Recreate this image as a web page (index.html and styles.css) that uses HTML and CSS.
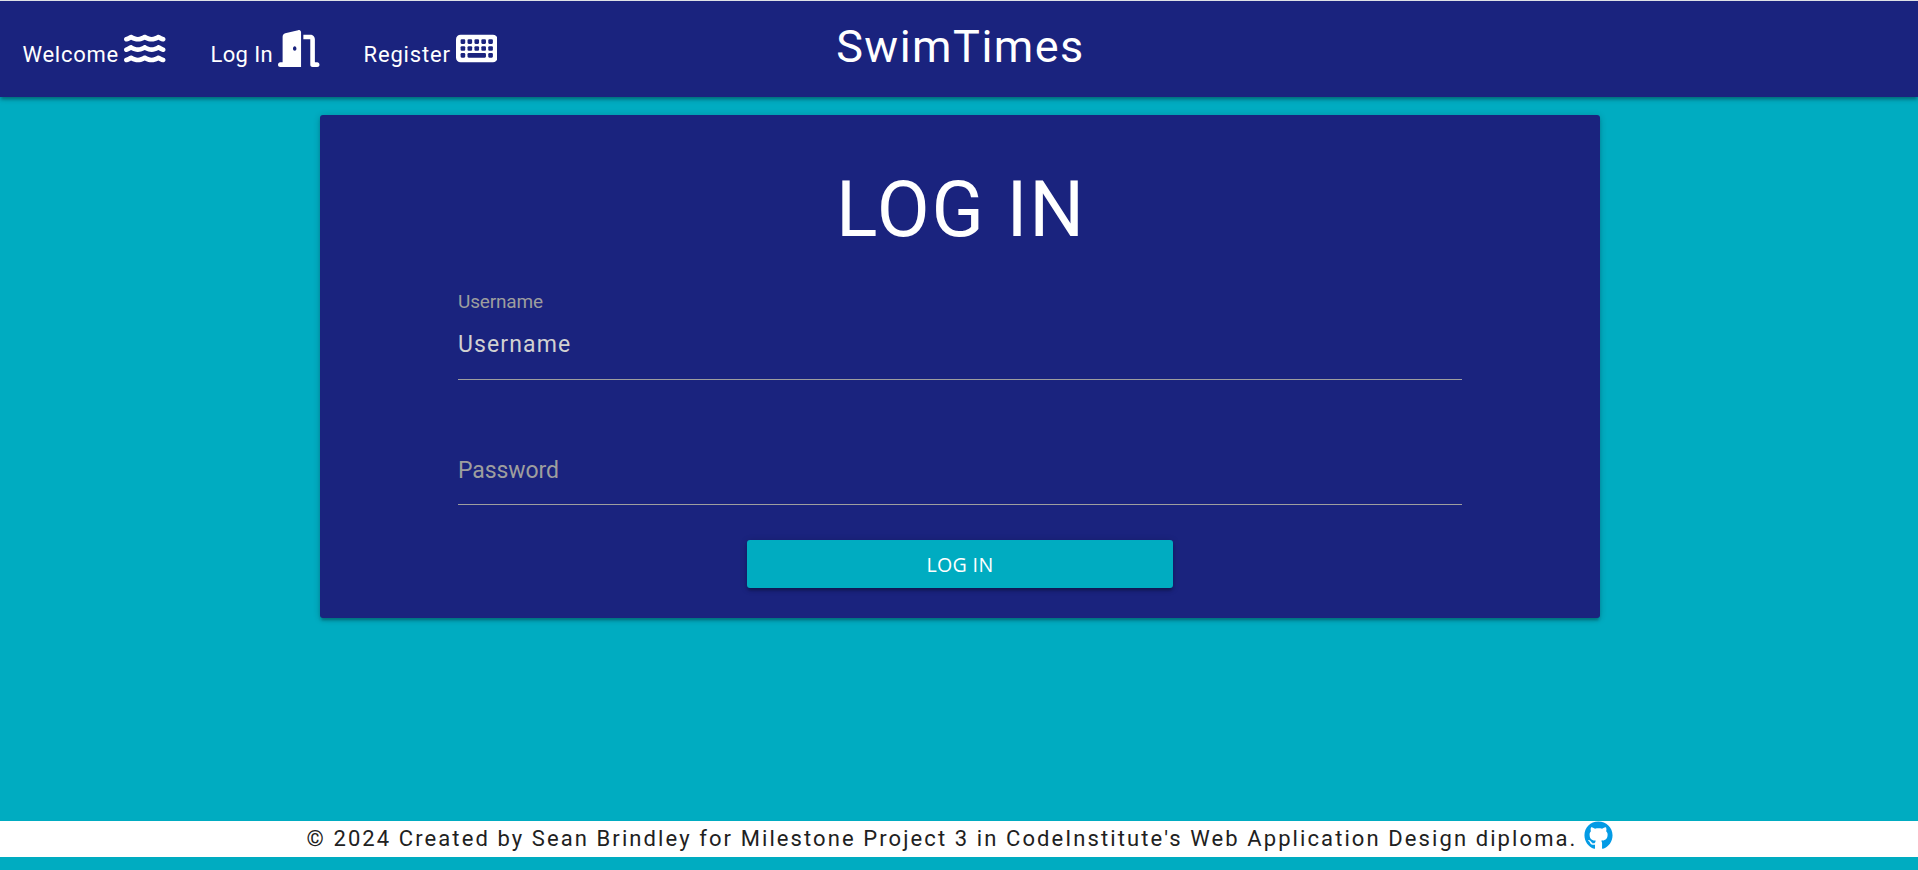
FILE: index.html
```html
<!DOCTYPE html>
<html lang="en">
<head>
<meta charset="utf-8">
<title>SwimTimes</title>
<link rel="stylesheet" href="styles.css">
</head>
<body>
<header class="navbar">
  <nav class="nav-links">
    <a class="nav-link" href="#"><span class="nav-text nav-text-welcome">Welcome</span><svg class="nav-icon" viewBox="0 0 576 512"><defs><path id="wave" d="M269.5 69.9c11.1-7.9 25.9-7.9 37 0C329 85.4 356.5 96 384 96c26.9 0 55.4-10.8 77.4-26.1c11.9-8.5 28.1-7.8 39.2 1.7c14.4 11.9 32.5 21 50.6 25.2c17.2 4 27.9 21.2 23.9 38.4s-21.2 27.9-38.4 23.9c-24.5-5.7-44.9-16.5-58.2-25C449.5 149.7 417 160 384 160c-31.9 0-60.6-9.9-80.4-18.9c-5.8-2.7-11.1-5.3-15.6-7.7c-4.5 2.4-9.7 5.1-15.6 7.7c-19.8 9-48.5 18.9-80.4 18.9c-33 0-65.5-10.3-94.5-25.8c-13.4 8.4-33.7 19.3-58.2 25c-17.2 4-34.4-6.7-38.4-23.9s6.7-34.4 23.9-38.4C42.8 92.6 61 83.5 75.3 71.6c11.1-9.5 27.3-10.1 39.2-1.7C136.7 85.2 165.1 96 192 96c27.5 0 55-10.6 77.5-26.1z"/></defs><use href="#wave"/><use href="#wave" y="144"/><use href="#wave" y="288"/></svg></a>
    <a class="nav-link" href="#"><span class="nav-text nav-text-login">Log In</span><svg class="nav-icon" viewBox="0 0 576 512"><path d="M320 32c0-9.9-4.5-19.2-12.3-25.2S289.8-1.4 280.2 1l-179.9 45C79 51.3 64 70.5 64 92.5V448H32c-17.7 0-32 14.3-32 32s14.3 32 32 32H320V32zM256 256c0 17.7-10.7 32-24 32s-24-14.3-24-32s10.7-32 24-32s24 14.3 24 32zM352 128h96V480c0 17.7 14.3 32 32 32h64c17.7 0 32-14.3 32-32s-14.3-32-32-32H512V128c0-35.3-28.7-64-64-64H352v64z"/></svg></a>
    <a class="nav-link" href="#"><span class="nav-text nav-text-register">Register</span><svg class="nav-icon" viewBox="0 0 576 512"><rect y="64" width="576" height="384" rx="64"/><g class="keys"><rect x="64" y="128" width="64" height="64" rx="16"/><rect x="160" y="128" width="64" height="64" rx="16"/><rect x="256" y="128" width="64" height="64" rx="16"/><rect x="352" y="128" width="64" height="64" rx="16"/><rect x="448" y="128" width="64" height="64" rx="16"/><rect x="64" y="224" width="64" height="64" rx="16"/><rect x="160" y="224" width="64" height="64" rx="16"/><rect x="256" y="224" width="64" height="64" rx="16"/><rect x="352" y="224" width="64" height="64" rx="16"/><rect x="448" y="224" width="64" height="64" rx="16"/><rect x="64" y="320" width="64" height="64" rx="16"/><rect x="160" y="320" width="256" height="64" rx="16"/><rect x="448" y="320" width="64" height="64" rx="16"/></g></svg></a>
  </nav>
  <a class="brand" href="#">SwimTimes</a>
  <div></div>
</header>
<main class="card">
  <h1 class="card-title">LOG IN</h1>
  <form class="form">
    <label class="label-small" for="username">Username</label>
    <input class="field username" id="username" type="text" placeholder="Username">
    <input class="field password" type="password" placeholder="Password" aria-label="Password">
    <button class="submit" type="button">LOG IN</button>
  </form>
</main>
<footer class="footer">
  <span class="copyright">© 2024 Created by Sean Brindley for Milestone Project 3 in CodeInstitute's Web Application Design diploma.</span>
  <a class="github" href="#"><svg class="github-icon" viewBox="0 0 496 512"><path d="M165.9 397.4c0 2-2.3 3.6-5.2 3.6-3.3.3-5.6-1.3-5.6-3.6 0-2 2.3-3.6 5.2-3.6 3-.3 5.6 1.3 5.6 3.6zm-31.1-4.5c-.7 2 1.3 4.3 4.3 4.9 2.6 1 5.6 0 6.2-2s-1.3-4.3-4.3-5.2c-2.6-.7-5.5.3-6.2 2.3zm44.2-1.7c-2.9.7-4.9 2.6-4.6 4.9.3 2 2.9 3.3 5.9 2.6 2.9-.7 4.9-2.6 4.6-4.6-.3-1.9-3-3.2-5.9-2.9zM244.8 8C106.1 8 0 113.3 0 252c0 110.9 69.8 205.8 169.5 239.2 12.8 2.3 17.3-5.6 17.3-12.1 0-6.2-.3-40.4-.3-61.4 0 0-70 15-84.7-29.8 0 0-11.4-29.1-27.8-36.6 0 0-22.9-15.7 1.6-15.4 0 0 24.9 2 38.6 25.8 21.9 38.6 58.6 27.5 72.9 20.9 2.3-16 8.8-27.1 16-33.7-55.9-6.2-112.3-14.3-112.3-110.5 0-27.5 7.6-41.3 23.6-58.9-2.6-6.5-11.1-33.3 2.6-67.9 20.9-6.5 69 27 69 27 20-5.6 41.5-8.5 62.8-8.5s42.8 2.9 62.8 8.5c0 0 48.1-33.6 69-27 13.7 34.7 5.2 61.4 2.6 67.9 16 17.7 25.8 31.5 25.8 58.9 0 96.5-58.9 104.2-114.8 110.5 9.2 7.9 17 22.9 17 46.4 0 33.7-.3 75.4-.3 83.6 0 6.5 4.6 14.4 17.3 12.1C428.2 457.8 496 362.9 496 252 496 113.3 383.5 8 244.8 8z"/></svg></a>
</footer>
</body>
</html>
```
FILE: styles.css
```css
* { box-sizing: border-box; }

body {
  margin: 0;
  height: 870px;
  overflow: hidden;
  display: flex;
  flex-direction: column;
  border-top: 1px solid #dee1e6;
  background: #00acc1;
  font-family: Roboto, sans-serif;
}

a { color: inherit; text-decoration: none; }

.navbar {
  flex: none;
  height: 96px;
  display: grid;
  grid-template-columns: 1fr auto 1fr;
  align-items: start;
  background: #1a237e;
  color: #fff;
  box-shadow: 0 3px 3px 0 rgba(0,0,0,.14), 0 4px 2px -2px rgba(0,0,0,.12), 0 1px 7px 0 rgba(0,0,0,.2);
}

.nav-links { display: flex; gap: 45px; padding: 29px 0 0 22.5px; }
.nav-link { display: flex; align-items: flex-start; }
.nav-text { font-size: 22px; line-height: 30px; padding-top: 10px; white-space: nowrap; }
.nav-text-welcome { width: 101.5px; letter-spacing: .74px; }
.nav-text-login { width: 67.5px; letter-spacing: .36px; }
.nav-text-register { width: 92px; letter-spacing: .84px; }
.nav-link:last-child { margin-left: -1px; }
.nav-icon { display: block; width: 41.5px; height: 37px; fill: #fff; }
.keys { fill: #1a237e; }

.brand {
  font-size: 45px;
  line-height: 60px;
  padding: 16px 0 0 3px;
  letter-spacing: 1.49px;
}

.card {
  flex: none;
  width: 1280px;
  height: 503px;
  margin: 18px 0 0 320px;
  padding: 0 138px;
  border-radius: 3px;
  background: #1a237e;
  color: #fff;
  box-shadow: 0 3px 3px 0 rgba(0,0,0,.14), 0 4px 2px -2px rgba(0,0,0,.12), 0 1px 7px 0 rgba(0,0,0,.2);
}

.card-title {
  margin: 0;
  padding: 45px 0 0 2px;
  font-size: 77px;
  line-height: 100px;
  font-weight: 400;
  letter-spacing: 1.8px;
  text-align: center;
}

.form { display: flex; flex-direction: column; }

.label-small {
  margin-top: 29px;
  font-size: 19px;
  line-height: 26px;
  letter-spacing: -.16px;
  color: #9e9e9e;
}

.field {
  width: 1004px;
  border: 0;
  border-bottom: 1px solid #9e9e9e;
  background: transparent;
  font: 400 23px/30px Roboto, sans-serif;
  outline: 0;
}
.username { height: 65px; padding: 0 0 5px; letter-spacing: 1.12px; }
.username::placeholder { color: #d1d1d1; opacity: 1; }
.password { height: 67px; margin-top: 58px; padding: 0 0 2px; letter-spacing: -.09px; }
.password::placeholder { color: #9e9e9e; opacity: 1; }

.submit {
  align-self: center;
  width: 426px;
  height: 48px;
  margin-top: 35px;
  padding: 2px 0 0;
  border: 0;
  border-radius: 3px;
  background: #00acc1;
  color: #fff;
  font: 400 19.6px/46px "Open Sans", sans-serif;
  letter-spacing: .34px;
  box-shadow: 0 3px 3px 0 rgba(0,0,0,.14), 0 4px 2px -2px rgba(0,0,0,.12), 0 1px 7px 0 rgba(0,0,0,.2);
}

.footer {
  flex: none;
  height: 36px;
  margin-top: 203px;
  padding-left: 306.5px;
  display: flex;
  background: #fff;
  color: #212121;
}
.copyright { width: 1277.5px; font-size: 22px; line-height: 35px; letter-spacing: 2.09px; white-space: nowrap; }
.github-icon { display: block; width: 29px; height: 29px; fill: #039be5; }
```
